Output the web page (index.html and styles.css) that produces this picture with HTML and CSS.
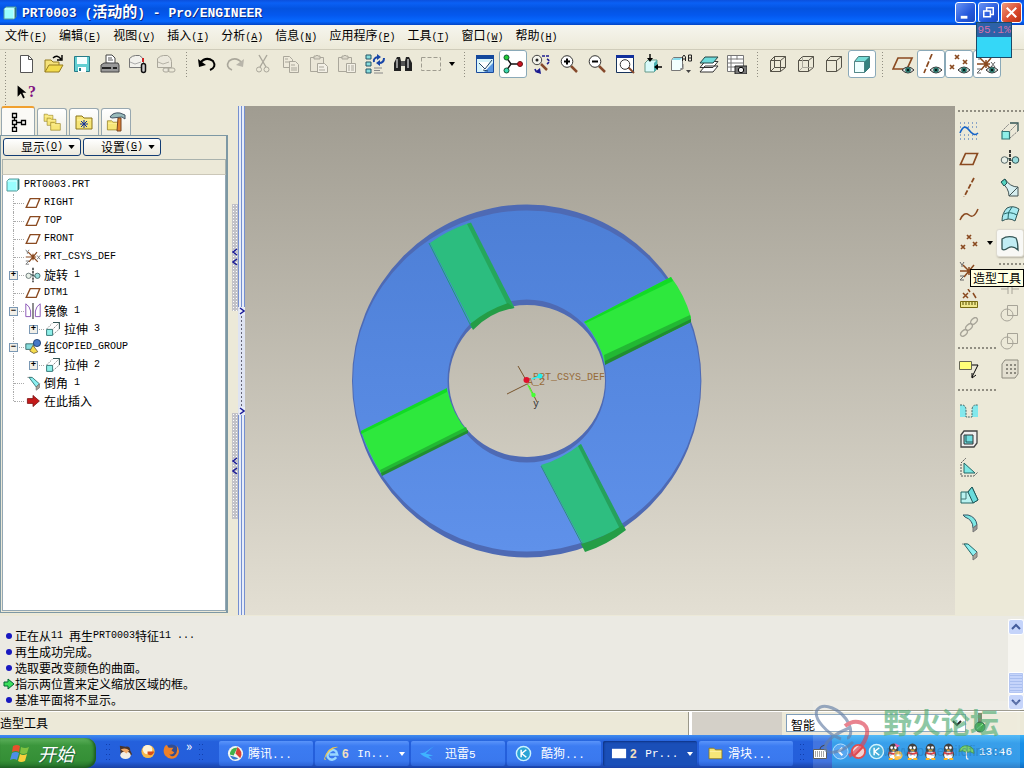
FILE: index.html
```html
<!DOCTYPE html>
<html lang="zh-CN">
<head>
<meta charset="utf-8">
<title>PRT0003 - Pro/ENGINEER</title>
<link rel="stylesheet" href="styles.css">
</head>
<body>
<svg class="defs" aria-hidden="true">
  <linearGradient id="view" x1="0" y1="0" x2="0" y2="1"><stop offset="0" stop-color="#a09c91"/><stop offset="1" stop-color="#e3dfd3"/></linearGradient>
  <linearGradient id="face" x1="0" y1="0" x2="0" y2="1"><stop offset="0" stop-color="#4d7fd6"/><stop offset="1" stop-color="#5f91ea"/></linearGradient>
  <symbol id="part" viewBox="0 0 16 16"><path d="M2 4l2-2h10v10l-2 2H2z" fill="#9ff" stroke="#599"/><path d="M12 4l2-2v10l-2 2z" fill="#377" /><path d="M2.500 4H12v9.500" fill="none" stroke="#dff"/></symbol>
  <symbol id="plane" viewBox="0 0 20 20"><path d="M6.500 4.500h12L14 15.500H1.500z" fill="none" stroke="#8a4a20" stroke-width="1.700"/></symbol>
  <symbol id="csys" viewBox="0 0 20 20"><path d="M1 10h13M4 4l12 12M15 4L5 16M10 6v8" fill="none" stroke="#8a4a20" stroke-width="1.500"/><path d="M1 1l2 3 2-3M3 4v2M15 8l4 5m0-5l-4 5M1 15h4l-4 4h4" fill="none" stroke="#666"/></symbol>
  <symbol id="extrude" viewBox="0 0 20 20"><path d="M2 10.500h7.500V18H2z" fill="#8fefe9" stroke="#377" stroke-width="1.200"/><path d="M2 10l7-7m0 8l8-8m-7 14l8-7" fill="none" stroke="#777" stroke-dasharray="2 1"/><path d="M10 2h8v8" fill="none" stroke="#355" stroke-width="1.300"/></symbol>
  <symbol id="revolve" viewBox="0 0 20 20"><circle cx="4.500" cy="11" r="3.300" fill="#e8f0e8" stroke="#566"/><circle cx="15.500" cy="11" r="3.300" fill="#9dd" stroke="#355"/><path d="M10 1v18" stroke="#000" stroke-width="1.500" stroke-dasharray="3 1"/><path d="M7 9l6 3" stroke="#355"/></symbol>
  <symbol id="chamfer" viewBox="0 0 20 20"><path d="M3 3h5l7 8v6" fill="none" stroke="#888"/><path d="M5 3h4l9 8-4 4z" fill="#8ceff0" stroke="#266"/><path d="M14 15v4l4-3v-5z" fill="#a9a59a" stroke="#777"/></symbol>
  <symbol id="eye" viewBox="0 0 12 8"><path d="M0 4q6-6 12 0-6 6-12 0z" fill="#ddd" stroke="#333"/><circle cx="6" cy="4" r="2.800" fill="#277268"/><circle cx="6" cy="4" r="1" fill="#000"/></symbol>
  <symbol id="xs" viewBox="0 0 20 20"><path d="M8 2l4 4m0-4l-4 4M2 12l4 4m0-4l-4 4M14 9l4 4m0-4l-4 4" stroke="#8a4a20" stroke-width="1.700" fill="none"/></symbol>
  <symbol id="box" viewBox="0 0 20 20"><path d="M2.500 6.500h10v11h-10zM2.500 6.500l4-4h11v11l-5 4M12.500 6.500l5-4" fill="none" stroke="#555248"/></symbol>
  <symbol id="lens" viewBox="0 0 20 20"><path d="M12 12l6 6" stroke="#864a2c" stroke-width="2.500"/><circle cx="8" cy="7.500" r="5.800" fill="#fff" stroke="#333"/></symbol>
  <symbol id="folder" viewBox="0 0 20 20"><path d="M2 4h6l2 2h8v11H2z" fill="#f7e678" stroke="#8b751a"/><path d="M3 8h14" stroke="#fff2a8"/></symbol>
  <symbol id="copyg" viewBox="0 0 20 20"><path d="M2.500 2.500h6l3 3v8h-9z" fill="#eeeadb" stroke="#aaa79b"/><path d="M8.500 7.500h6l3 3v8h-9z" fill="#eeeadb" stroke="#aaa79b"/><path d="M4 5h3M4 8h5M10 11h4m-4 3h6m-6 2h6" stroke="#aaa79b"/></symbol>
  <symbol id="pasteg" viewBox="0 0 20 20"><path d="M1.500 3.500h13v14h-13z" fill="#eae6d7" stroke="#aaa79b"/><path d="M5 5V2h2l1-1 1 1h2v3z" fill="#ddd9cb" stroke="#aaa79b"/><path d="M9.500 9.500h9v9h-9z" fill="#f3f0e6" stroke="#aaa79b"/><path d="M11 12h2m1 0h3m-6 2h2m1 0h3m-6 2h2m1 0h3" stroke="#aaa79b"/></symbol>
  <symbol id="penguin" viewBox="0 0 16 18"><ellipse cx="8" cy="6" rx="5" ry="5.500" fill="#222"/><ellipse cx="8" cy="12" rx="6" ry="5" fill="#333"/><ellipse cx="8" cy="13" rx="4.500" ry="4" fill="#fff"/><circle cx="6" cy="5" r="1.500" fill="#fff"/><circle cx="10" cy="5" r="1.500" fill="#fff"/><path d="M5 7h6l-3 2z" fill="#fa0"/><path d="M3 9q5 3 10 0v2q-5 3-10 0z" fill="#d22"/><path d="M3 16h4v2H3zm6 0h4v2H9z" fill="#fa0"/></symbol>
  <symbol id="merge" viewBox="0 0 20 20"><circle cx="7" cy="12" r="6" fill="none" stroke="#a7a498"/><path d="M7.500 2.500h10v10h-10z" fill="none" stroke="#a7a498"/></symbol>
  <symbol id="left" viewBox="0 0 6 18"><path d="M5 1L1 4l4 3M5 11l-4 3 4 3" fill="none" stroke="#1c1c98" stroke-width="1.500"/></symbol>
  <symbol id="right" viewBox="0 0 6 8"><path d="M1 1l4 3-4 3" fill="none" stroke="#1c1c98" stroke-width="1.500"/></symbol>
</svg>

<header class="title">
  <svg class="i16"><use href="#part"/></svg>
  <h1>PRT0003 (<span class="han">活动的</span>) - Pro/ENGINEER</h1>
  <div class="winbtns">
    <button class="wb" aria-label="最小化"><svg viewBox="0 0 20 20"><path d="M5 15h7" stroke="#fff" stroke-width="3"/></svg></button>
    <button class="wb" aria-label="还原"><svg viewBox="0 0 20 20"><path d="M8 8V5h7v7h-3M5 8.500h7v6H5z" fill="none" stroke="#fff" stroke-width="1.600"/></svg></button>
    <button class="wb close" aria-label="关闭"><svg viewBox="0 0 20 20"><path d="M5 5l10 10M15 5L5 15" stroke="#fff" stroke-width="2.200"/></svg></button>
  </div>
  <div class="meter">95.1%</div>
</header>

<nav class="menu">
  <button>文件<span class="m">(<u>F</u>)</span></button><button>编辑<span class="m">(<u>E</u>)</span></button><button>视图<span class="m">(<u>V</u>)</span></button><button>插入<span class="m">(<u>I</u>)</span></button><button>分析<span class="m">(<u>A</u>)</span></button><button>信息<span class="m">(<u>N</u>)</span></button><button>应用程序<span class="m">(<u>P</u>)</span></button><button>工具<span class="m">(<u>T</u>)</span></button><button>窗口<span class="m">(<u>W</u>)</span></button><button>帮助<span class="m">(<u>H</u>)</span></button>
</nav>

<div class="toolbar">
  <span class="grip"></span>
  <button class="tb" aria-label="新建"><svg viewBox="0 0 20 20"><path d="M4.500 1.500h8l4 4v13h-12z" fill="#fff" stroke="#555"/><path d="M12.500 1.500v4h4" fill="none" stroke="#555"/></svg></button>
  <button class="tb" aria-label="打开"><svg viewBox="0 0 20 20"><path d="M1 18V6h6l2 2h6v4" fill="#f5e27a" stroke="#967d20"/><path d="M1 18l4-7h14l-4 7z" fill="#f2db4c" stroke="#967d20"/><path d="M9 4q4-4 8 1M18 1v5h-5" fill="none" stroke="#000" stroke-width="1.400"/></svg></button>
  <button class="tb" aria-label="保存"><svg viewBox="0 0 20 20"><path d="M2.500 2.500h15v15h-15z" fill="#62cfd2" stroke="#277b88"/><path d="M5 3h10v7H5z" fill="#f4ffff"/><path d="M6 13h8v5H6z" fill="#fff"/><path d="M7 14h2v3H7z" fill="#277b88"/></svg></button>
  <button class="tb" aria-label="打印"><svg viewBox="0 0 20 20"><path d="M6 9V1h6l3 3v6z" fill="#fff" stroke="#444"/><path d="M8 4h4M8 6h5" stroke="#555"/><path d="M1 11l3-2h14l1 2v7H1z" fill="#999" stroke="#444"/><path d="M2 14h15" stroke="#222" stroke-width="2"/><path d="M11 14h2" stroke="#fff"/></svg></button>
  <button class="tb" aria-label="发送附件"><svg viewBox="0 0 20 20"><path d="M1.500 13.500v-9q3-3 6-3h4q4 2 4 6v6z" fill="#f2f1ec" stroke="#777"/><path d="M2 8l5 2 6-2" stroke="#aaa" fill="none"/><path d="M15 4v4" stroke="#c22" stroke-width="2"/><rect x="13.500" y="9.500" width="4" height="9" rx="2" fill="#ccc" stroke="#111" stroke-width="1.500"/></svg></button>
  <button class="tb" aria-label="发送链接"><svg viewBox="0 0 20 20"><path d="M1.500 13.500v-9q3-3 6-3h4q4 2 4 6v6z" fill="#ebe8dc" stroke="#aaa79b"/><path d="M2 8l5 2 6-2" stroke="#b5b2a6" fill="none"/><rect x="7" y="14" width="6" height="4" rx="2" fill="#ebe8dc" stroke="#aaa79b"/><rect x="12" y="14" width="7" height="4" rx="2" fill="none" stroke="#aaa79b"/></svg></button>
  <span class="grip"></span>
  <button class="tb" aria-label="撤消"><svg viewBox="0 0 20 20"><path d="M3 9q6-7 13-2 4 6-3 9" fill="none" stroke="#000" stroke-width="2"/><path d="M1 5l1 8 7-2z" fill="#000"/></svg></button>
  <button class="tb" aria-label="重做"><svg viewBox="0 0 20 20"><path d="M17 9Q11 2 4 7q-4 6 3 9" fill="none" stroke="#aaa79b" stroke-width="1.600"/><path d="M19 5l-1 8-7-2z" fill="#b8b5aa"/></svg></button>
  <button class="tb" aria-label="剪切"><svg viewBox="0 0 20 20"><path d="M6 1l7 12M14 1L7 13" stroke="#aaa79b" stroke-width="1.400"/><circle cx="6" cy="15.500" r="2.500" fill="none" stroke="#aaa79b"/><circle cx="13.500" cy="15.500" r="2.500" fill="none" stroke="#aaa79b"/></svg></button>
  <button class="tb" aria-label="复制"><svg><use href="#copyg"/></svg></button>
  <button class="tb" aria-label="粘贴"><svg viewBox="0 0 20 20"><path d="M1.500 3.500h13v14h-13z" fill="#eae6d7" stroke="#aaa79b"/><path d="M5 5V2h2l1-1 1 1h2v3z" fill="#ddd9cb" stroke="#aaa79b"/><path d="M8.500 9.500h7l3 3v6h-10z" fill="#f3f0e6" stroke="#aaa79b"/><path d="M10 13h5m-5 3h6" stroke="#aaa79b"/></svg></button>
  <button class="tb" aria-label="选择性粘贴"><svg><use href="#pasteg"/></svg></button>
  <button class="tb" aria-label="再生"><svg viewBox="0 0 20 20"><path d="M1 1h5v4H1zM1 8h5v4H1zM1 15h5v4H1z" fill="#8dd" stroke="#256"/><path d="M9 8q-1-4 4-5M19 4q0 5-5 5" fill="none" stroke="#1846a8" stroke-width="2"/><path d="M12 0l4 3-4 3zM15 6l-4 3 4 3z" fill="#1846a8"/><path d="M9 14h8M9 16.500h6M9 19h9" stroke="#888"/></svg></button>
  <button class="tb" aria-label="查找"><svg viewBox="0 0 20 20"><path d="M2 7l2-4h3l1 4v10H1v-8zM12 7l1-4h3l2 4 1 2v8h-7z" fill="#222"/><path d="M8 7h4v5H8z" fill="#555"/><path d="M4 5v9M15 5v9" stroke="#bbb" stroke-width="1.500"/></svg></button>
  <button class="tb" aria-label="选择框"><svg viewBox="0 0 20 20"><path d="M.5 3.500h19v13H.5z" fill="none" stroke="#9f9c90" stroke-dasharray="4 2"/></svg></button>
  <button class="drop" aria-label="选择选项"><svg viewBox="0 0 6 4"><path d="M0 0h6L3 4z"/></svg></button>
  <span class="grip"></span>
  <button class="tb" aria-label="重画"><svg viewBox="0 0 20 20"><path d="M1.500 1.500h17v17h-17z" fill="#d8f4fa" stroke="#1a4a9c"/><path d="M1 1h18v4H1z" fill="#14489c"/><path d="M4 8l10 0-1 7-5 2z" fill="#fff"/><path d="M18 9v9H9z" fill="#5b96e0"/><path d="M17 6l-7 9-6-6M8 16l5 1" stroke="#246" fill="none"/></svg></button>
  <button class="tb on" aria-label="旋转中心"><svg viewBox="0 0 20 20"><path d="M3 3l5 7-5 7M8 10h9" fill="none" stroke="#111" stroke-width="1.400"/><circle cx="3.500" cy="3.500" r="2.500" fill="#2c3" stroke="#153"/><circle cx="3.500" cy="16.500" r="2.500" fill="#3cd9b0" stroke="#153"/><circle cx="17" cy="10" r="2.500" fill="#c12" stroke="#611"/></svg></button>
  <button class="tb" aria-label="定向模式"><svg viewBox="0 0 20 20"><path d="M10 10l6 6" stroke="#864a2c" stroke-width="2.500"/><circle cx="6" cy="6" r="4.700" fill="#f4f4ec" stroke="#444"/><circle cx="6" cy="6" r="1.500" fill="#222"/><path d="M11 2h7M16 5q4 2 0 5M4 15q1 4 5 3" fill="none" stroke="#1c1c90" stroke-width="1.600" stroke-dasharray="3 1"/><path d="M4 18l6 2-1-6z" fill="#1c1c90"/></svg></button>
  <button class="tb" aria-label="放大"><svg viewBox="0 0 20 20"><use href="#lens" width="20" height="20"/><path d="M5 7.500h6M8 4.500v6" stroke="#000" stroke-width="2"/></svg></button>
  <button class="tb" aria-label="缩小"><svg viewBox="0 0 20 20"><use href="#lens" width="20" height="20"/><path d="M5 7.500h6" stroke="#000" stroke-width="2"/></svg></button>
  <button class="tb" aria-label="重新调整"><svg viewBox="0 0 20 20"><path d="M1.500 1.500h17v17h-17z" fill="#fff" stroke="#17335c"/><path d="M1 1h18v3H1z" fill="#12309c"/><path d="M13 13l6 6" stroke="#864a2c" stroke-width="2"/><circle cx="10" cy="10.500" r="4.800" fill="#fff" stroke="#333"/></svg></button>
  <button class="tb" aria-label="重定向"><svg viewBox="0 0 20 20"><path d="M2 9l3-3h9v9l-3 3H2z" fill="#d8fafa" stroke="#698"/><path d="M11 9l3-3v9l-3 3z" fill="#49b0b0"/><path d="M7 0v6M19 13h-6" stroke="#000" stroke-width="1.400"/><path d="M4 4h6L7 8zM15 10v6l-4-3z"/></svg></button>
  <button class="tb" aria-label="视图列表"><svg class="wide" viewBox="0 0 22 20"><path d="M1.500 6.500l2-3h9v10l-2 3h-9z" fill="#f2ffff" stroke="#777"/><path d="M2 6l2-2h8l-2 2z" fill="#8de"/><path d="M13 10v5h-3" fill="none" stroke="#777"/><path d="M16 16h5l-2.500 3z" fill="#444"/><path d="M12.500 7V3l1.500-2 1.500 2v4m-3-2h3M18.500 1v6h3V1zm0 3h3" fill="none" stroke="#222"/></svg></button>
  <button class="tb" aria-label="层"><svg viewBox="0 0 20 20"><path d="M6 12h13l-5 6H1zM6 7.500h13l-5 6H1z" fill="#fff" stroke="#333"/><path d="M6 3h13l-5 6H1z" fill="#6edcdc" stroke="#244"/></svg></button>
  <button class="tb" aria-label="视图管理器"><svg viewBox="0 0 20 20"><path d="M.5 1.500h16v16H.500zM.500 5h16M.500 9h16M.500 13h16M4 1.500v16M10 1.500v4" fill="#fff" stroke="#777"/><path d="M8 12h12v8H8z" fill="#777" stroke="#222"/><circle cx="14" cy="16" r="2.700" fill="#eee" stroke="#000"/></svg></button>
  <span class="grip"></span>
  <button class="tb" aria-label="线框"><svg viewBox="0 0 20 20"><use href="#box" width="20" height="20"/><path d="M6.500 2.500v11h11M2.500 17.500l4-4" fill="none" stroke="#555248"/></svg></button>
  <button class="tb" aria-label="隐藏线"><svg viewBox="0 0 20 20"><use href="#box" width="20" height="20"/><path d="M6.500 2.500v11h11M2.500 17.500l4-4" fill="none" stroke="#aaa79b"/></svg></button>
  <button class="tb" aria-label="无隐藏线"><svg><use href="#box"/></svg></button>
  <button class="tb on" aria-label="着色"><svg viewBox="0 0 20 20"><path d="M2.500 7.500l4-5h11v11l-5 5h-10z" fill="#76dcd7" stroke="#477"/><path d="M2.500 7.500h10v11h-10z" fill="#eff" stroke="#588"/><path d="M12.500 7.500l5-5v11l-5 5z" fill="#33827f"/></svg></button>
  <span class="grip"></span>
  <button class="tb" aria-label="基准平面"><svg class="wide" viewBox="0 0 22 20"><path d="M6 4h14l-5 11H1z" fill="none" stroke="#8a4a20" stroke-width="1.700"/><use href="#eye" x="10" y="12" width="12" height="8"/></svg></button>
  <button class="tb on" aria-label="基准轴"><svg class="wide" viewBox="0 0 22 20"><path d="M12 0L4 19" stroke="#8a4a20" stroke-width="1.700" stroke-dasharray="6 2"/><use href="#eye" x="10" y="12" width="12" height="8"/></svg></button>
  <button class="tb on" aria-label="基准点"><svg class="wide" viewBox="0 0 22 20"><path d="M7 1l4 4m0-4L7 5M2 11l4 4m0-4l-4 4M15 6l4 4m0-4l-4 4" stroke="#8a4a20" stroke-width="1.700"/><use href="#eye" x="10" y="12" width="12" height="8"/></svg></button>
  <button class="tb on" aria-label="坐标系"><svg class="wide" viewBox="0 0 22 20"><use href="#csys" width="20" height="20"/><use href="#eye" x="10" y="12" width="12" height="8"/></svg></button>
  <div class="row2"><span class="grip"></span><button class="tb" aria-label="帮助"><svg viewBox="0 0 20 20"><path d="M2 2v14l4-4 3 6 2-1-3-6h5z"/></svg><span class="q">?</span></button></div>
</div>

<main class="main">
  <aside class="side">
    <div class="tabs">
      <button class="tab sel" aria-label="模型树"><svg viewBox="0 0 20 20"><path d="M4.500 1.500h4v4h-4zM4.500 8.500h4v4h-4zM4.500 15.500h4v4h-4zM13.500 8.500h4v4h-4zM6.500 6v2M6.500 13v2M9 10.500h4" fill="none" stroke="#000" stroke-width="1.300"/></svg></button>
      <button class="tab" aria-label="文件夹浏览器"><svg viewBox="0 0 20 20"><use href="#folder" width="13" height="11"/><use href="#folder" x="3" y="4" width="13" height="11"/><use href="#folder" x="7" y="8" width="13" height="12"/></svg></button>
      <button class="tab" aria-label="收藏夹"><svg viewBox="0 0 20 20"><use href="#folder" width="20" height="20"/><path d="M10 8v8M6 12h8M7 9l6 6M13 9l-6 6" stroke="#12309c"/></svg></button>
      <button class="tab" aria-label="连接"><svg viewBox="0 0 20 20"><use href="#folder" y="6" width="14" height="14"/><path d="M4 5q3-5 10-4l5 2v4l-3-2-10 1z" fill="#9bb" stroke="#456"/><path d="M12 6h3v13h-4z" fill="#e08030" stroke="#742"/></svg></button>
    </div>
    <div class="panel">
      <div class="btns">
        <button class="xp">显示<span class="m">(<u>O</u>)</span><svg viewBox="0 0 8 5"><path d="M0 0h8L4 5z"/></svg></button>
        <button class="xp">设置<span class="m">(<u>G</u>)</span><svg viewBox="0 0 8 5"><path d="M0 0h8L4 5z"/></svg></button>
      </div>
      <div class="colhead"></div>
      <ul class="tree">
        <li class="root"><svg><use href="#part"/></svg><span class="m">PRT0003.PRT</span></li>
        <li><i></i><svg><use href="#plane"/></svg><span class="m">RIGHT</span></li>
        <li><i></i><svg><use href="#plane"/></svg><span class="m">TOP</span></li>
        <li><i></i><svg><use href="#plane"/></svg><span class="m">FRONT</span></li>
        <li><i></i><svg><use href="#csys"/></svg><span class="m">PRT_CSYS_DEF</span></li>
        <li><i></i><button class="ex" aria-label="展开">+</button><svg><use href="#revolve"/></svg>旋转<span class="m"> 1</span></li>
        <li><i></i><svg><use href="#plane"/></svg><span class="m">DTM1</span></li>
        <li><i></i><button class="ex" aria-label="折叠">−</button><svg viewBox="0 0 20 20"><path d="M1 1q5 3 6 9v7H1zM19 1q-5 3-6 9v7h6z" fill="#fff" stroke="#8c58b8" stroke-width="1.200"/><path d="M10 0v20" stroke="#444" stroke-width="1.500"/></svg>镜像<span class="m"> 1</span></li>
        <li class="sub"><i></i><button class="ex" aria-label="展开">+</button><svg><use href="#extrude"/></svg>拉伸<span class="m"> 3</span></li>
        <li><i></i><button class="ex" aria-label="折叠">−</button><svg viewBox="0 0 20 20"><path d="M1 6h10v7H1z" fill="#8dd" stroke="#255"/><circle cx="15" cy="5" r="4.500" fill="#4779c8" stroke="#136"/><path d="M10 8l6 8-5 2-5-3z" fill="#f5dc4c" stroke="#653"/></svg>组<span class="m">COPIED_GROUP</span></li>
        <li class="sub"><i></i><button class="ex" aria-label="展开">+</button><svg><use href="#extrude"/></svg>拉伸<span class="m"> 2</span></li>
        <li><i></i><svg><use href="#chamfer"/></svg>倒角<span class="m"> 1</span></li>
        <li class="last"><i></i><svg viewBox="0 0 20 20"><path d="M3 7h7V3l8 7-8 7v-4H3z" fill="#c41a1a" stroke="#711"/></svg>在此插入</li>
      </ul>
    </div>
  </aside>
  <div class="split">
    <div class="sa"><button aria-label="收起上部"><svg class="two"><use href="#left"/></svg></button><span></span><button aria-label="收起下部"><svg class="two"><use href="#left"/></svg></button></div>
    <div class="sb"><button aria-label="展开侧栏"><svg><use href="#right"/></svg><svg><use href="#right"/></svg></button></div>
  </div>
  <section class="view">
    <svg viewBox="245 106 710 509" preserveAspectRatio="none" role="img" aria-label="零件模型">
      <path fill="url(#view)" d="M245 106h710v509H245z"/>
      <path fill="#4e6ab4" fill-rule="evenodd" d="M352 381a174.700 176.500 0 0 1 349.400 0a174.700 176.500 0 0 1-349.400 0zM449 381a78 76 0 0 0 156 0a78 76 0 0 0-156 0z"/>
      <path fill="url(#face)" fill-rule="evenodd" d="M353 381a173.700 170.500 0 0 1 347.400 0a173.700 170.500 0 0 1-347.400 0zM447.500 381a79.300 81.500 0 0 0 158.600 0a79.300 81.500 0 0 0-158.600 0z"/>
      <path fill="#2cbd7f" d="M430 243q18-13 39-20l45 84q-23 3-41 20z"/>
      <path fill="#25a75c" d="M467 224l4-1.500 43.500 85.500-5 1z"/><path fill="#249d46" d="M470 324q17-14 38-21l6 5q-24 4-41 22z"/>
      <path d="M429 243l43 85" stroke="#1d9d78" fill="none"/>
      <path fill="#2ee83d" d="M584 322l87-45q13 17 20 40v5l-86 42q-5-23-21-42z"/>
      <path fill="#12db25" d="M584 322l87-45 2 4-87 42z"/><path fill="#22b933" d="M604 355l86-40 1 7-86 42z"/><path fill="#218d30" d="M605 361l86-42v3l-86 43z"/>
      <path fill="#2ee83d" d="M361 431l86-42q5 25 21 43l-86 43q-13-21-21-44z"/>
      <path fill="#12db25" d="M361 431l86-43v4l-86 42z"/><path fill="#22b933" d="M380 470l86-43 2 5-86 43z"/><path fill="#218d30" d="M381 473l87-43v3l-86 43z"/>
      <path fill="#2ebe80" d="M541 465q19-5 40-21l42 84-40 16z"/>
      <path fill="#25a15c" d="M578 446l3-2 44 85-4 2z"/><path fill="#249d46" d="M581 544q22-6 42-19l3 5q-19 15-41 22z"/>
      <path d="M541 466l41 78" stroke="#2d917b" fill="none"/>
      <path d="M518 366l8 14M507 394l20-10M529 386l8 16" fill="none" stroke="#79552d"/>
      <path d="M528 385l6 12" stroke="#5f3" stroke-width="1.500"/>
      <text class="cs" x="533" y="380">PRT_CSYS_DEF</text><text class="cs" x="527" y="385">A_2</text>
      <text class="yy" x="533" y="407">y</text>
      <path d="M532 379l8-3" stroke="#3ee" stroke-width="1.500"/><circle cx="540" cy="376" r="2.500" fill="#2ee"/><circle cx="533.500" cy="395" r="2.200" fill="#4f3"/><circle cx="526.500" cy="380" r="3" fill="#e0102c"/>
    </svg>
  </section>
  <aside class="tools">
    <div class="col c1">
      <span class="hgrip"></span>
      <button class="tb" aria-label="草绘"><svg viewBox="0 0 20 20"><path d="M1 2h18M1 6h18M1 14h18M1 18h18" stroke="#2860b8" stroke-dasharray="1 3"/><path d="M1 12q4-10 9-3t9 3" fill="none" stroke="#1664c8" stroke-width="1.600"/></svg></button>
      <button class="tb" aria-label="平面"><svg><use href="#plane"/></svg></button>
      <button class="tb" aria-label="轴"><svg viewBox="0 0 20 20"><path d="M15 1L5 20" stroke="#8a4a20" stroke-width="1.800" stroke-dasharray="5 2"/></svg></button>
      <button class="tb" aria-label="曲线"><svg viewBox="0 0 20 20"><path d="M1 15q4-9 9-5t9-6" fill="none" stroke="#8a4a20" stroke-width="1.500"/></svg></button>
      <div class="pair"><button class="tb" aria-label="点"><svg><use href="#xs"/></svg></button><button class="drop" aria-label="点选项"><svg viewBox="0 0 6 4"><path d="M0 0h6L3 4z"/></svg></button></div>
      <button class="tb" aria-label="坐标系工具"><svg><use href="#csys"/></svg></button>
      <button class="tb" aria-label="分析特征"><svg viewBox="0 0 20 20"><path d="M4 4l5 5m0-5L4 9M9 0l2 3M14 4l3 5" stroke="#8a4a20" stroke-width="1.500"/><path d="M1.500 12.500h17v6h-17z" fill="#efe78c" stroke="#776b10"/><path d="M4 13v3m3-3v3m3-3v3m3-3v3m3-3v3" stroke="#554c00"/></svg></button>
      <button class="tb" aria-label="参照"><svg viewBox="0 0 20 20" fill="none" stroke="#a7a498" stroke-width="1.300"><ellipse cx="5" cy="16" rx="4" ry="2.500" transform="rotate(-45 5 16)"/><ellipse cx="10" cy="10" rx="4" ry="2.500" transform="rotate(-45 10 10)"/><ellipse cx="15" cy="4" rx="4" ry="2.500" transform="rotate(-45 15 4)"/></svg></button>
      <span class="hgrip"></span>
      <button class="tb" aria-label="注释"><svg viewBox="0 0 20 20"><path d="M.5 2.500h12v8H.5z" fill="#ffff78" stroke="#665"/><path d="M13 6h6l-6 12m0-4v5l4-3" fill="none" stroke="#000"/></svg></button>
      <span class="hgrip"></span>
      <button class="tb" aria-label="孔"><svg viewBox="0 0 20 20"><path d="M1 4h3q3 1 3 5v7H1zM19 4h-3q-3 1-3 5v7h6z" fill="#83e8ec"/><path d="M1 4h3q3 1 3 5v7h6V9q0-4 3-5h3" fill="none" stroke="#466" stroke-dasharray="2 1"/></svg></button>
      <button class="tb" aria-label="壳"><svg viewBox="0 0 20 20"><path d="M2 6l3-4h13v12l-3 4H2z" fill="#eee" stroke="#444" stroke-width="1.300"/><path d="M5 6h9v9H5z" fill="#70dde0" stroke="#333"/><path d="M7 6v7h7" fill="none" stroke="#255"/></svg></button>
      <button class="tb" aria-label="筋"><svg viewBox="0 0 20 20"><path d="M5 6v10h11z" fill="#7de8e4" stroke="#266"/><path d="M2 7v12h13l4-4M2 6l5-5" fill="none" stroke="#555" stroke-dasharray="2 1"/></svg></button>
      <button class="tb" aria-label="拔模"><svg viewBox="0 0 20 20"><path d="M2 7h7l4-5 6 13-5 3H2z" fill="#b9f2f0" stroke="#266"/><path d="M9 7l5 11 5-3-6-13z" fill="#69dcdc" stroke="#255"/><path d="M2 14h5V7" fill="none" stroke="#477"/></svg></button>
      <button class="tb" aria-label="倒圆角"><svg viewBox="0 0 20 20"><path d="M4 2h5q8 2 9 10l-4 3q0-8-8-11z" fill="#7de8e4" stroke="#356"/><path d="M14 15v4l4-3v-4z" fill="#999" stroke="#777"/></svg></button>
      <button class="tb" aria-label="倒角"><svg><use href="#chamfer"/></svg></button>
    </div>
    <div class="col c2">
      <span class="hgrip"></span>
      <button class="tb" aria-label="拉伸"><svg><use href="#extrude"/></svg></button>
      <button class="tb" aria-label="旋转"><svg><use href="#revolve"/></svg></button>
      <button class="tb" aria-label="可变截面扫描"><svg viewBox="0 0 20 20"><path d="M1 5l4-3q5 8 13 8v9h-9q0-8-8-14z" fill="#d6eef0" stroke="#455"/><path d="M1 5l4-3 2 4-3 3z" fill="#53d4c0" stroke="#255"/><path d="M9 19l9-9" stroke="#455"/></svg></button>
      <button class="tb" aria-label="边界混合"><svg viewBox="0 0 20 20"><path d="M7 3q6-3 12 1l-4 12q-6-4-13 0Q2 8 7 3z" fill="#a6e9f0" stroke="#355"/><path d="M4 9q6-3 13 1M12 2q-5 5-4 12" fill="none" stroke="#266"/></svg></button>
      <button class="tb raised" aria-label="造型工具"><svg viewBox="0 0 20 20"><path d="M2 6q6-4 14-1 2 4 2 12-5-5-10-2-4 3-6 1z" fill="#c1edf4" stroke="#355" stroke-width="1.300"/></svg></button>
      <span class="hgrip"></span>
      <button class="tb" aria-label="镜像"><svg viewBox="0 0 20 20"><path d="M8 2v17M12 2v17M1 14h7m4 0h7" stroke="#a7a498"/></svg></button>
      <button class="tb" aria-label="合并"><svg><use href="#merge"/></svg></button>
      <button class="tb" aria-label="修剪"><svg><use href="#merge"/></svg></button>
      <button class="tb" aria-label="阵列"><svg viewBox="0 0 20 20"><path d="M2 5l3-4h13v14l-3 4H2z" fill="#e3dfd0" stroke="#8d8a7f"/><path d="M6 6h10M6 10h10M6 14h10" stroke="#8d8a7f" stroke-width="2" stroke-dasharray="2 2"/></svg></button>
    </div>
    <div class="tip" role="tooltip">造型工具</div>
  </aside>
</main>

<section class="log">
  <ul>
    <li><i class="dot"></i>正在从<span class="m">11 </span>再生<span class="m">PRT0003</span>特征<span class="m">11 ...</span></li>
    <li><i class="dot"></i>再生成功完成。</li>
    <li><i class="dot"></i>选取要改变颜色的曲面。</li>
    <li><svg viewBox="0 0 12 12"><path d="M1 4h4V1l6 5-6 5V8H1z" fill="#3ce05c" stroke="#063"/></svg>指示两位置来定义缩放区域的框。</li>
    <li><i class="dot"></i>基准平面将不显示。</li>
  </ul>
  <div class="scroll">
    <button aria-label="向上滚动"><svg viewBox="0 0 10 10"><path d="M1 7l4-4 4 4" fill="none" stroke="#435c9c" stroke-width="2"/></svg></button>
    <div class="track"><div class="thumb"></div></div>
    <button aria-label="向下滚动"><svg viewBox="0 0 10 10"><path d="M1 3l4 4 4-4" fill="none" stroke="#435c9c" stroke-width="2"/></svg></button>
  </div>
</section>

<footer class="status">
  <span class="hint">造型工具</span>
  <span class="well"></span>
  <select aria-label="过滤器"><option>智能</option></select>
  <svg class="light" viewBox="0 0 12 20"><path d="M4 0h4v10H4z" fill="#6c7a58"/><circle cx="6" cy="14" r="5" fill="#2a9c3a" stroke="#143"/><path d="M3 16l6-5" stroke="#7e8"/></svg>
</footer>

<footer class="task">
  <button class="start"><svg viewBox="0 0 20 20"><path d="M3 3q4-2 7 0L9 9q-3-2-7 0z" fill="#e8502c"/><path d="M11 4q4 2 8 0l-2 6q-4 2-7 0z" fill="#7fc241"/><path d="M2 10q4-2 7 0l-2 7q-3-2-7 0z" fill="#4d8fe8"/><path d="M10 11q3 2 7 0l-2 7q-4 2-7 0z" fill="#f8cf3c"/></svg>开始</button>
  <div class="quick">
    <span class="tgrip"></span>
    <a href="#" aria-label="QQ游戏"><svg viewBox="0 0 18 18"><path d="M3 3l6 1q5-1 5 4l2 4q-6 6-12 1z" fill="#4a342a"/><ellipse cx="9" cy="13" rx="5.500" ry="4" fill="#f3ede3"/><path d="M4 7q5-3 9 1l-3 3z" fill="#f1a867"/></svg></a>
    <a href="#" aria-label="聊天"><svg viewBox="0 0 18 18"><circle cx="8.500" cy="9" r="7" fill="#f6b94a"/><circle cx="8" cy="7" r="5" fill="#fff4d8"/><path d="M8 9h7q-2 6-7 3z" fill="#d84b18"/></svg></a>
    <a href="#" aria-label="Firefox"><svg viewBox="0 0 18 18"><circle cx="9" cy="9" r="7.500" fill="#324d92"/><path d="M1 6q1-4 3-4l2 3h5l-2 3 3 2q-3 4-6 1 4 6 8 0 2-5 0-9 6 7 0 13-7 4-12-2-2-3-1-7z" fill="#ee8128"/></svg></a>
    <span class="more">»</span>
    <span class="tgrip"></span>
  </div>
  <div class="wins">
    <button><svg viewBox="0 0 18 18"><circle cx="9" cy="9" r="8" fill="#f2f7f2"/><path d="M3 10q1-8 8-7l-4 8z" fill="#42b049"/><path d="M11 2q7 5 3 12l-5-5z" fill="#d94134"/><path d="M3 11q5 1 9 3-5 4-9-3z" fill="#3478d0"/></svg><span>腾讯<span class="m">...</span></span></button>
    <button class="many"><svg viewBox="0 0 18 18"><path d="M14 13q-3 4-7 2-4-3-1-7 4-5 8-1l1 3H7" fill="none" stroke="#9ad8ff" stroke-width="2.500"/><path d="M16 2Q5 1 1 15q4 2 1-1Q6 4 16 2z" fill="#f3c94a"/></svg><b>6</b><span class="m"> In...</span><svg class="car" viewBox="0 0 6 4"><path d="M0 0h6L3 4z" fill="#fff"/></svg></button>
    <button class="gap"><svg viewBox="0 0 18 18"><path d="M16 1L7 9l8 2-5 1 4 4-9-4-4-3 5-1z" fill="#3fb4ff"/></svg><span>迅雷<span class="m">5</span></span></button>
    <button class="gap"><svg viewBox="0 0 18 18"><circle cx="9" cy="9" r="7.500" fill="#2ba3d5" stroke="#c9f2ff" stroke-width="1.500"/><path d="M6.500 5v8M12 5l-5 4 5 4" fill="none" stroke="#fff" stroke-width="1.600"/></svg><span>酷狗<span class="m">...</span></span></button>
    <button class="many act"><svg viewBox="0 0 18 18"><path d="M1 4h15v10H1z" fill="#fff"/></svg><b>2</b><span class="m"> Pr...</span><svg class="car" viewBox="0 0 6 4"><path d="M0 0h6L3 4z" fill="#fff"/></svg></button>
    <button><svg viewBox="0 0 20 20"><use href="#folder" width="20" height="19"/></svg><span>滑块<span class="m">...</span></span></button>
  </div>
  <span class="tgrip"></span>
  <svg class="kbd" viewBox="0 0 14 16"><path d="M7 5q0-3 5-4" stroke="#222" fill="none"/><path d="M.5 5.500h13v9H.5z" fill="#fff" stroke="#444"/><path d="M2 8h10M2 10h10M2 12h10" stroke="#333" stroke-dasharray="1 1"/></svg>
  <div class="tray">
    <svg viewBox="0 0 18 18"><circle cx="9" cy="9" r="8" fill="#3e9af0" stroke="#b5e0ff"/><path d="M11 5L7 9l4 4" fill="none" stroke="#fff" stroke-width="2"/></svg>
    <svg viewBox="0 0 18 18"><circle cx="9" cy="9" r="7" fill="#f3cdcd" stroke="#d33" stroke-width="2"/><path d="M4 14L14 4" stroke="#d33" stroke-width="2"/></svg>
    <svg viewBox="0 0 18 18"><circle cx="9" cy="9" r="7.500" fill="#2ba3d5" stroke="#c9f2ff" stroke-width="1.500"/><path d="M6.500 5v8M12 5l-5 4 5 4" fill="none" stroke="#fff" stroke-width="1.600"/></svg>
    <svg viewBox="0 0 18 18"><use href="#penguin" width="16" height="18"/><path d="M9 0l6 3-4 2z" fill="#e4489b"/><circle cx="13" cy="13" r="4.500" fill="#fb3"/><path d="M10 13h6" stroke="#fff" stroke-width="2"/></svg>
    <svg><use href="#penguin"/></svg>
    <svg><use href="#penguin"/></svg>
    <svg><use href="#penguin"/></svg>
    <svg viewBox="0 0 18 18"><path d="M1 9q2-7 9-6 7 1 7 8-4-3-8-1-4-3-8-1z" fill="#64ca55" stroke="#2a8c3c"/><path d="M9 9v6q0 2 2 2" fill="none" stroke="#eee" stroke-width="1.300"/></svg>
    <time class="m">13:46</time>
  </div>
  <div class="mark">
    <svg viewBox="0 0 64 60"><path d="M28 35C14 30 0 14 4 6c6-8 24-2 32 14 4 10 0 14-2 14M36 24c-10 4-24 12-24 20 2 8 18 4 28-6" fill="none" stroke="#7088ac" stroke-width="3"/><path d="M32 22c10-8 24-4 22 8-2 10-10 18-18 22" fill="none" stroke="#e05060" stroke-width="4"/></svg>
    <div class="words"><strong>野火论坛</strong><span>www.proewildfire.cn</span></div>
  </div>
</footer>
</body>
</html>
```
FILE: styles.css
```css
* { box-sizing: border-box; }
body { margin: 0; height: 100vh; display: flex; flex-direction: column; overflow: hidden; background: #ece9d8; color: #000; font: 12px/16px "Noto Sans CJK SC", sans-serif; }
button { font: inherit; color: inherit; border: 0; background: none; padding: 0; white-space: nowrap; }
ul { list-style: none; margin: 0; padding: 0; }
svg { display: block; flex: none; }
.defs { position: absolute; width: 0; height: 0; }
.m { font-family: "Liberation Mono", monospace; font-size: 10px; white-space: pre; }

.title { position: relative; flex: none; height: 25px; display: flex; align-items: center; padding: 0 2px; background: linear-gradient(#0c50dc, #0a60f5 12%, #0453e0 35%, #0458ee 60%, #0768ff 85%, #0345c5); }
.title h1 { flex: 1; margin: 0 0 0 4px; color: #fff; font: bold 13px/20px "Liberation Mono", monospace; text-shadow: 1px 1px #0a2a88; }
.han { font: bold 15px/20px "Noto Sans CJK SC", sans-serif; }
.i16 { width: 16px; height: 16px; }
.winbtns { display: flex; gap: 2px; }
.wb { width: 21px; height: 21px; border: 1px solid #fff; border-radius: 3px; background: linear-gradient(135deg, #6a94f4, #2558dc 60%, #1c48c0); }
.wb.close { background: linear-gradient(135deg, #f09a7c, #d9472b 60%, #b83010); }
.meter { position: absolute; z-index: 3; right: 12px; top: 22px; width: 36px; height: 36px; border: 1px solid #1b4a68; background: linear-gradient(#2c62a8 14px, #35d7f7 14px); color: #d66fa6; font: 11px/14px "Liberation Mono", monospace; text-align: center; }

.menu { flex: none; height: 24px; display: flex; gap: 12px; align-items: center; padding: 0 0 2px 5px; background: linear-gradient(#f6f5ee, #ece9d8); }

.toolbar { flex: none; display: flex; flex-wrap: wrap; height: 57px; align-content: flex-start; border-top: 1px solid #cfccba; }
.row2 { display: flex; width: 100%; }
.row2 .tb { display: flex; }
.row2 .tb svg { width: 16px; height: 18px; }
.q { color: #801080; font: bold 16px/20px "Liberation Serif", serif; margin-left: -4px; }
.grip { width: 13px; height: 26px; margin-top: 1px; background: radial-gradient(circle, #918e82 1px, transparent 1px) 0 0 / 3px 3px content-box; padding: 0 5px; }
.toolbar > .grip:first-child, .row2 .grip { width: 12px; padding: 0 5px 0 4px; }
.tb { width: 28px; height: 28px; display: grid; place-items: center; flex: none; }
.row2 .tb { align-items: center; justify-content: center; }
.tb svg { width: 20px; height: 20px; }
.tb svg.wide { width: 22px; height: 20px; }
.tb.on { border: 1px solid #8aa9b8; border-radius: 3px; background: #fff; }
.tb.raised { border: 1px solid #dedbd0; border-radius: 3px; background: #f8f8f5; box-shadow: 1px 1px 2px #b5b2a4; }
.drop { width: 13px; height: 28px; display: grid; place-items: center; }
.drop svg { width: 6px; height: 4px; }

.main { flex: 1; min-height: 0; display: flex; }
.side { width: 228px; flex: none; display: flex; flex-direction: column; padding-bottom: 2px; }
.tabs { display: flex; gap: 2px; height: 29px; align-items: flex-end; padding-left: 1px; }
.tab { width: 30px; height: 27px; display: grid; place-items: center; border: 1px solid #98a8b0; border-bottom: 0; border-radius: 3px 3px 0 0; background: linear-gradient(#fff, #f0eee2); }
.tab svg { width: 20px; height: 20px; }
.tab.sel { width: 34px; height: 29px; border-top: 2px solid #f0a030; background: #fbfaf6; }
.panel { flex: 1; min-height: 0; display: flex; flex-direction: column; border: 1px solid #7d98a4; border-right-width: 2px; padding: 2px 0 1px 1px; }
.btns { display: flex; gap: 2px; height: 19px; margin-bottom: 2px; padding-left: 1px; }
.xp { width: 78px; height: 18px; display: flex; align-items: center; justify-content: flex-end; border: 1px solid #123c74; border-radius: 3px; background: linear-gradient(#fff, #ece9dd); padding-right: 5px; line-height: 14px; }
.xp svg { width: 7px; height: 4px; margin-left: 5px; }
.colhead { height: 16px; border: 1px solid #a9b2ad; border-bottom-color: #cbc7b8; }
.tree { flex: 1; min-height: 0; overflow: hidden; background: #fff; border: 1px solid #94a8b4; border-top: 0; padding-top: 1px; }
.tree li { position: relative; display: flex; align-items: center; height: 18px; padding-left: 22px; }
.tree li svg { width: 16px; height: 16px; margin-right: 3px; }
.tree li.root { padding-left: 2px; }
.tree li.sub { padding-left: 42px; }
.tree i { position: absolute; left: 10px; top: 0; width: 11px; height: 18px; border-left: 1px dotted #aaa; }
.tree i::after { content: ""; position: absolute; left: 0; right: 0; top: 9px; border-top: 1px dotted #aaa; }
.tree .last i { height: 9px; }
.tree .sub i::after { left: 20px; right: -20px; }
.tree .m, .log .m { line-height: 18px; }
.ex { position: absolute; left: 6px; top: 5px; width: 9px; height: 9px; border: 1px solid #7b98b4; background: #f1efe8; font: bold 9px/7px "Liberation Mono", monospace; text-align: center; }
.sub .ex { left: 26px; }

.split { width: 17px; flex: none; display: flex; padding-left: 4px; }
.sa { width: 6px; display: flex; flex-direction: column; padding: 98px 0 96px; }
.sa button { flex: 1; display: grid; place-items: center; background: radial-gradient(circle, #fff 1px, transparent 1px) 0 0 / 3px 3px #c2c2c8; }
.sa span { height: 102px; }
.split svg { width: 6px; height: 8px; }
.split svg.two { width: 6px; height: 18px; }
.sb { width: 7px; background: linear-gradient(90deg, #7690d0 1px, #e8edf8 1px 3px, #7690d0 3px 4px, #e8edf8 4px 6px, #7690d0 6px); display: flex; flex-direction: column; justify-content: center; }
.sb button { height: 108px; display: flex; flex-direction: column; justify-content: space-between; align-items: center; background: radial-gradient(circle, #667 1px, transparent 1px) 0 0 / 7px 4px #dfe4f2; }
.sb svg { background: #e8edf8; }

.view { flex: 1; min-width: 0; }
.view svg { width: 100%; height: 100%; }
.cs { fill: #956a38; font: 10px "Liberation Mono", monospace; }
.yy { fill: #333; font: 10px "Liberation Mono", monospace; }

.tools { position: relative; width: 69px; flex: none; display: flex; }
.col { display: flex; flex-direction: column; }
.c1 { width: 41px; }
.c2 { width: 28px; }
.hgrip { height: 14px; padding: 5px 0 5px 2px; background: radial-gradient(circle, #918e82 1px, transparent 1px) 0 0 / 4px 4px content-box; }
.hgrip:first-child { height: 11px; padding: 3px 0 4px 2px; }
.pair { display: flex; }
.tip { position: absolute; right: 0; top: 163px; border: 1px solid #000; background: #ffffe1; padding: 0 2px; white-space: nowrap; }

.log { flex: none; height: 95px; display: flex; justify-content: space-between; background: #ebeae3; border-top: 1px solid #ece9d8; }
.log ul { padding: 12px 0 0 3px; }
.log li { display: flex; align-items: center; height: 16px; }
.log svg { width: 12px; height: 12px; }
.dot { width: 6px; height: 6px; margin: 0 3px; border-radius: 50%; background: #1818c0; }
.scroll { width: 16px; display: flex; flex-direction: column; margin-top: 3px; background: #f6f5f0; }
.scroll button { height: 16px; display: grid; place-items: center; border: 1px solid #fff; border-radius: 3px; background: #c5d4fa; }
.scroll button svg { width: 10px; height: 10px; }
.track { flex: 1; display: flex; align-items: flex-end; }
.thumb { width: 100%; height: 22px; border: 1px solid #fff; border-radius: 2px; background: repeating-linear-gradient(#c5d4fa 0 2px, #a9beef 2px 3px); outline: 1px solid #b4c6f2; outline-offset: -2px; }

.status { flex: none; height: 25px; display: flex; align-items: center; border-top: 1px solid #8f8d80; box-shadow: inset 0 1px #fff; }
.hint { flex: 1; }
.well { width: 94px; align-self: stretch; margin: 1px 4px 0 0; border-left: 1px solid #9a988a; background: linear-gradient(90deg, #fff 3px, #d4d0c8 3px); }
.status select { width: 180px; height: 18px; border: 1px solid #7f9db9; background: #fff; color: #000; font: inherit; line-height: 16px; padding: 0; }
.light { width: 12px; height: 20px; margin: 0 38px 0 8px; }

.task { position: relative; flex: none; height: 33px; display: flex; align-items: stretch; color: #fff; background: linear-gradient(#3f8cf0, #2460dc 20%, #245edb 80%, #1941a5); }
.start { width: 96px; margin-top: 3px; display: flex; align-items: center; padding-left: 10px; gap: 8px; border-radius: 0 10px 10px 0; background: linear-gradient(#5db05c, #3b963c 25%, #358f36 75%, #24702a); box-shadow: inset -2px -1px 3px #1c5a20; color: #fff; font-size: 18px; font-style: italic; text-shadow: 1px 1px #264; }
.start svg { width: 20px; height: 20px; }
.quick { width: 123px; display: flex; align-items: center; gap: 6px; padding-left: 9px; }
.quick svg { width: 17px; height: 17px; }
.quick .more { align-self: flex-start; margin-top: 3px; font-size: 13px; }
.tgrip { width: 6px; height: 20px; align-self: center; background: radial-gradient(circle, #123fae 1px, transparent 1px) 0 0 / 3px 5px; }
.wins { flex: 1; min-width: 0; display: grid; grid-template-columns: repeat(6, 1fr); gap: 2px; padding-top: 6px; }
.wins button { min-width: 0; height: 25px; display: flex; align-items: center; gap: 4px; padding: 0 4px 0 8px; border-radius: 2px; background: linear-gradient(#5a94fa, #3c7cf2 20%, #3a78ee 80%, #2c62d4); }
.wins .act { background: #1a4fb8; box-shadow: inset 1px 1px 2px #0e3384; }
.wins svg { width: 17px; height: 17px; }
.wins .many { gap: 2px; }
.wins .gap svg { margin-right: 5px; }
.wins .car { width: 6px; height: 4px; margin-left: auto; }
.wins .m { font-size: 11px; }
.wins b { color: #f0dfc0; font: bold 12px/16px "Liberation Sans", sans-serif; }
.wins + .tgrip { margin: 0 12px 0 6px; }
.kbd { width: 14px; height: 16px; align-self: center; margin: 0 5px 0 -4px; }
.tray { width: 192px; display: flex; align-items: center; gap: 1px; background: linear-gradient(#3ab0f6, #1890e8 25%, #168ce6 80%, #0f6cc0); }
.tray svg { width: 17px; height: 17px; }
.tray time { margin-left: auto; padding-right: 12px; font-size: 11px; }

.mark { position: absolute; right: 4px; bottom: 0; width: 207px; height: 67px; display: flex; gap: 6px; background: rgba(255, 255, 255, .2); opacity: .7; pointer-events: none; }
.mark svg { width: 64px; height: 60px; margin-top: 3px; }
.words { display: flex; flex-direction: column; white-space: nowrap; }
.words strong { color: #5fb27f; font-size: 29px; line-height: 40px; }
.words span { color: #2c6a9c; font: 14px/20px "Liberation Sans", sans-serif; opacity: .5; }
```
